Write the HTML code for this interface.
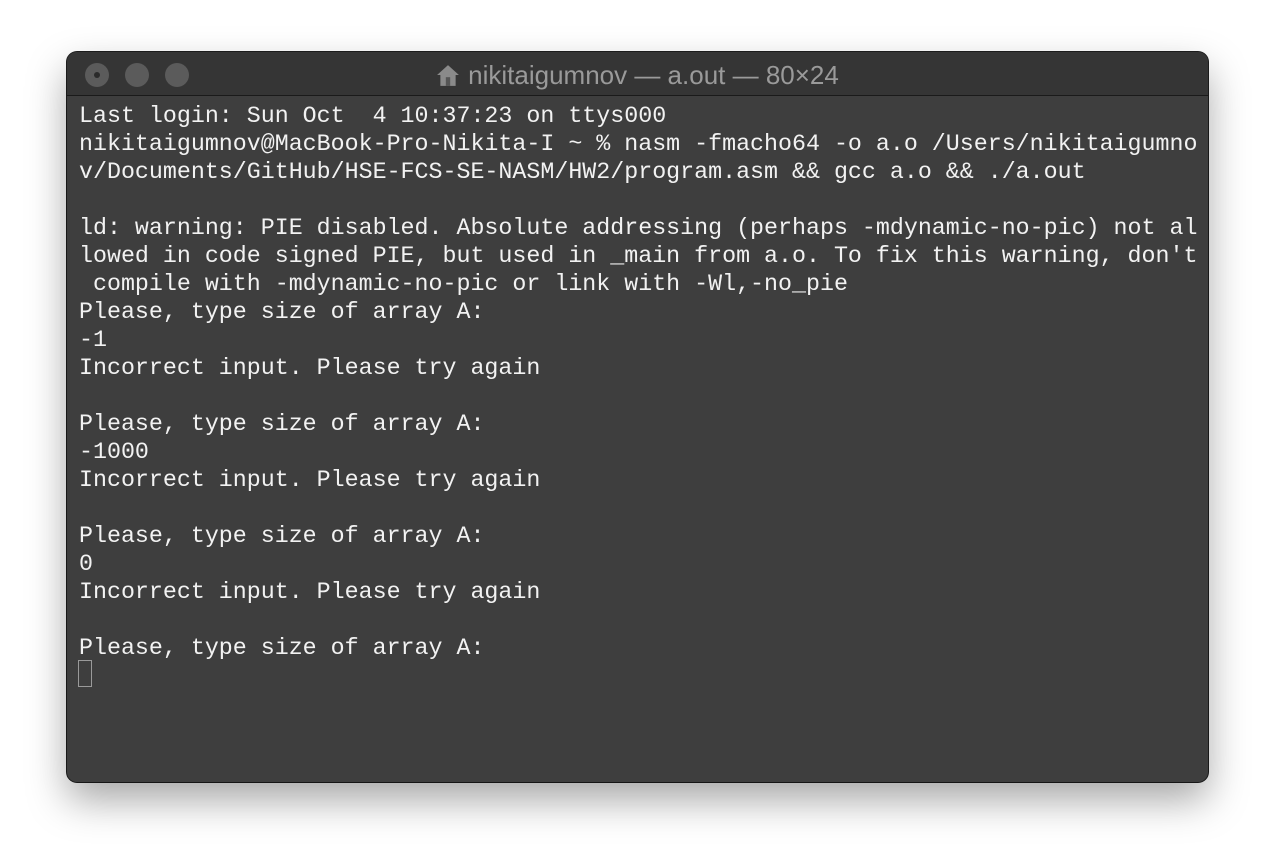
<!DOCTYPE html>
<html><head><style>
body{margin:0;width:1276px;height:866px;background:#fff;position:relative;overflow:hidden}
.win{position:absolute;left:67px;top:52px;width:1141px;height:730px;background:#3e3e3e;border-radius:10px;box-shadow:0 18px 40px rgba(0,0,0,.35),0 0 0 1px #1e1e1e;overflow:hidden}
.tb{position:absolute;left:0;top:0;width:100%;height:43px;background:#353535;border-bottom:1px solid #1a1a1a}
.btn{position:absolute;top:11px;width:24px;height:24px;border-radius:50%;background:#5b5b5b}
.dot{position:absolute;left:9px;top:9px;width:6px;height:6px;border-radius:50%;background:#2a2a2a}
.title{position:absolute;left:0;right:0;top:8px;text-align:center;font:26px "Liberation Sans",sans-serif;color:#9a9a9a}
pre{position:absolute;left:12px;top:50px;margin:0;font:23.3px/28px "Liberation Mono",monospace;color:#f2f2f2}
.cur{position:absolute;left:11px;top:608px;width:12px;height:25px;border:1.5px solid #9a9a9a}
</style></head><body>
<div class="win">
<div class="tb">
<div class="btn" style="left:18px"><div class="dot"></div></div>
<div class="btn" style="left:58px"></div>
<div class="btn" style="left:98px"></div>
<div class="title"><svg width="24" height="24" viewBox="0 0 22 22" style="vertical-align:-3px;margin-right:8px"><path d="M11 2 L21 11 H18 V21 H4 V11 H1 Z" fill="#8a8a8a"/><rect x="9" y="13" width="4" height="8" fill="#555"/></svg>nikitaigumnov — a.out — 80×24</div>
</div>
<pre>Last login: Sun Oct  4 10:37:23 on ttys000
nikitaigumnov@MacBook-Pro-Nikita-I ~ % nasm -fmacho64 -o a.o /Users/nikitaigumno
v/Documents/GitHub/HSE-FCS-SE-NASM/HW2/program.asm &amp;&amp; gcc a.o &amp;&amp; ./a.out

ld: warning: PIE disabled. Absolute addressing (perhaps -mdynamic-no-pic) not al
lowed in code signed PIE, but used in _main from a.o. To fix this warning, don't
 compile with -mdynamic-no-pic or link with -Wl,-no_pie
Please, type size of array A:
-1
Incorrect input. Please try again

Please, type size of array A:
-1000
Incorrect input. Please try again

Please, type size of array A:
0
Incorrect input. Please try again

Please, type size of array A:</pre>
<div class="cur"></div>
</div>
</body></html>
